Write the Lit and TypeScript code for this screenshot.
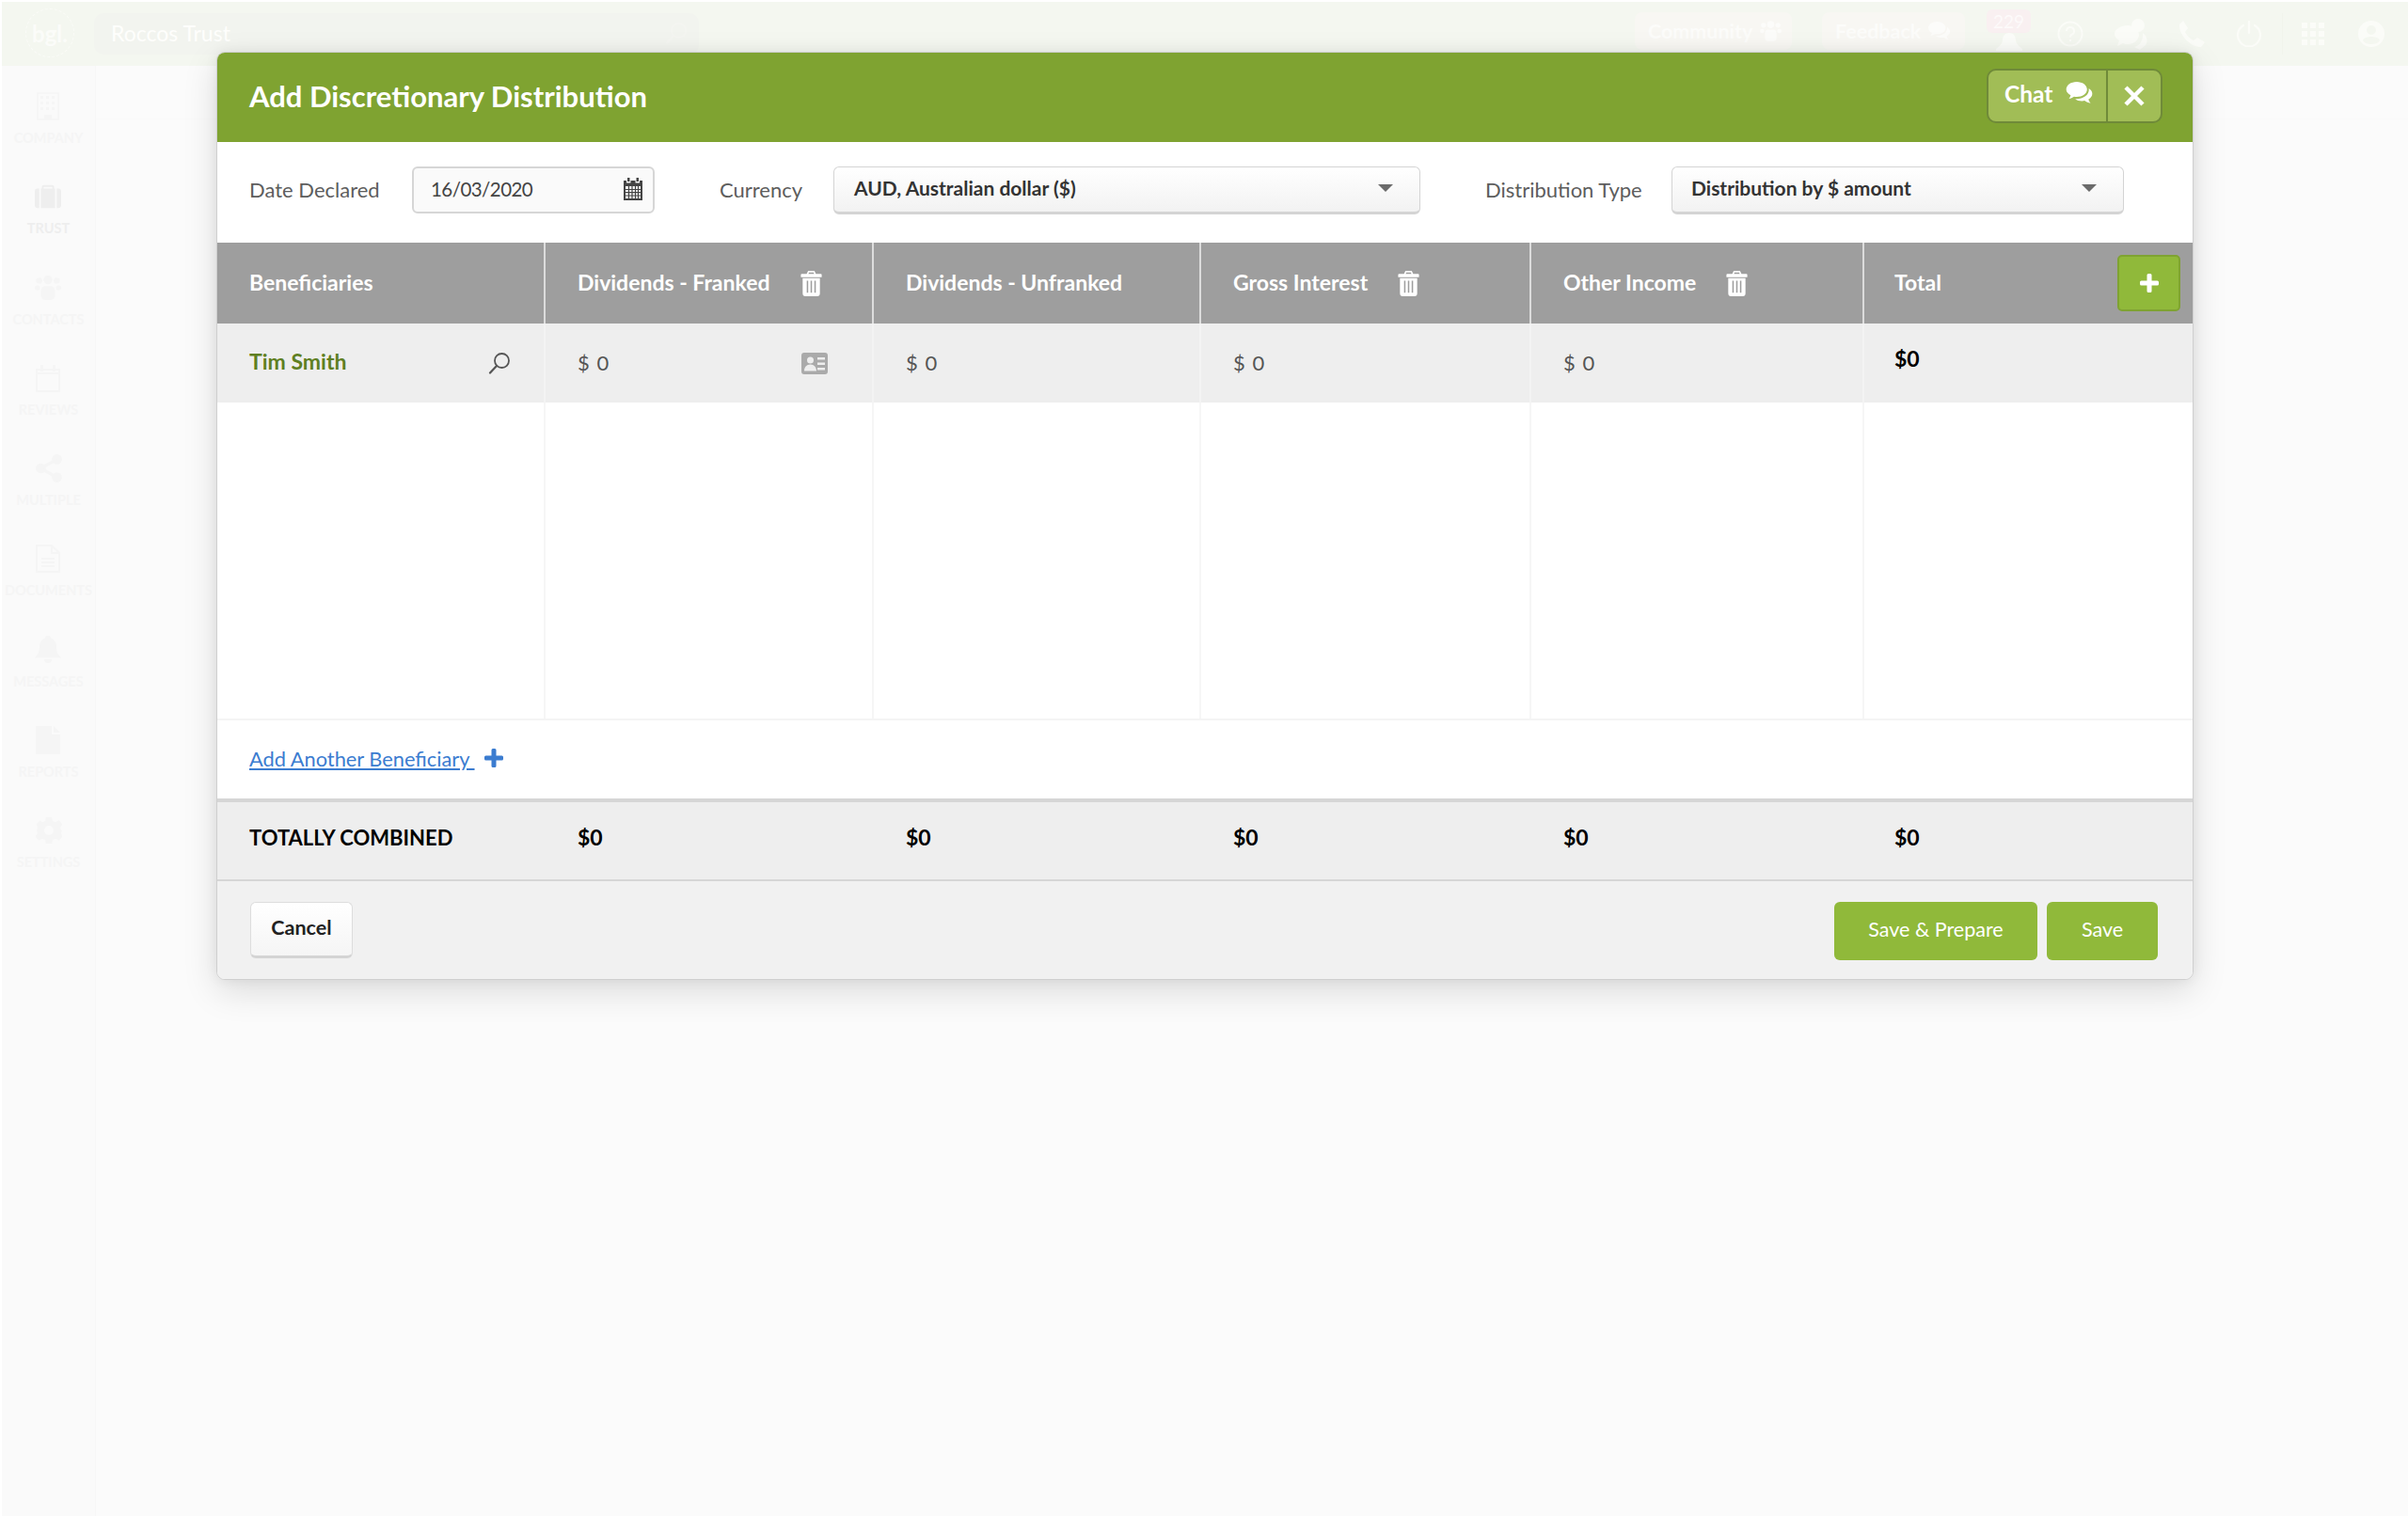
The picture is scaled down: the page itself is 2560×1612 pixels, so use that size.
import { LitElement, html, css, svg } from "lit";
import { customElement } from "lit/decorators.js";

const ic = (cls: string, vb: string, body: unknown) =>
  html`<svg class=${cls} viewBox=${vb} aria-hidden="true">${body}</svg>`;

const trash = () => ic("i-trash", "0 0 23 28", svg`
  <path fill="currentColor" d="M8 0h7l1.6 3.4H22a1 1 0 0 1 1 1V7H0V4.400a1 1 0 0 1 1-1h5.400zM9 1.800 8.300 3.400h6.400L14 1.800z"/>
  <path fill="currentColor" fill-rule="evenodd" d="M2 8h19v17a3 3 0 0 1-3 3H5a3 3 0 0 1-3-3zM6.500 11v13h1.600V11zM10.700 11v13h1.600V11zM14.900 11v13h1.600V11z"/>`);

const bubbles = (cls: string) => ic(cls, "0 0 30 26", svg`
  <path fill="currentColor" d="M12 0c6.600 0 12 3.900 12 8.700s-5.400 8.700-12 8.700c-1 0-2-.1-3-.3-1.800 1.300-3.800 2.100-6 2.400 1-1.100 1.800-2.500 2.100-4C2 14 0 11.500 0 8.700 0 3.900 5.400 0 12 0z"/>
  <path fill="currentColor" d="M26 7.500c2.500 1.500 4 3.700 4 6.200 0 2.600-1.700 5-4.300 6.400.3 1.700 1.200 3.300 2.400 4.600-2.600-.3-4.900-1.300-6.900-2.900-1 .2-2 .3-3 .3-3.100 0-5.900-.9-7.900-2.400 7.900.6 16.900-4.100 15.700-12.200z"/>`);

const plus = (cls: string) => ic(cls, "0 0 20 20", svg`
  <path fill="currentColor" d="M7.500 1.500a1.500 1.500 0 0 1 1.500-1.500h2a1.500 1.500 0 0 1 1.500 1.500v6h6a1.500 1.500 0 0 1 1.500 1.500v2a1.500 1.500 0 0 1-1.500 1.500h-6v6a1.500 1.500 0 0 1-1.500 1.500H9a1.500 1.500 0 0 1-1.500-1.500v-6h-6A1.500 1.500 0 0 1 0 11V9a1.500 1.500 0 0 1 1.500-1.500h6z"/>`);

const paw = (cls: string) => ic(cls, "0 0 30 28", svg`
  <g fill="currentColor"><circle cx="15" cy="5" r="5"/><circle cx="5" cy="6" r="3.500"/><circle cx="25" cy="6" r="3.500"/><circle cx="3" cy="14" r="3"/><circle cx="27" cy="14" r="3"/><rect x="7" y="12" width="16" height="16" rx="5"/></g>`);

const sideIcons: Record<string, unknown> = {
  COMPANY: ic("s-icon", "0 0 24 30", svg`<path fill="none" stroke="currentColor" stroke-width="1.500" d="M1 1h22v28H1z"/><g fill="currentColor"><rect x="4" y="4" width="3" height="3"/><rect x="10" y="4" width="3" height="3"/><rect x="16" y="4" width="3" height="3"/><rect x="4" y="10" width="3" height="3"/><rect x="10" y="10" width="3" height="3"/><rect x="16" y="10" width="3" height="3"/><rect x="4" y="16" width="3" height="3"/><rect x="10" y="16" width="3" height="3"/><rect x="16" y="16" width="3" height="3"/><rect x="8" y="24" width="8" height="5"/></g>`),
  TRUST: ic("s-icon", "0 0 30 26", svg`<path fill="currentColor" d="M10 0h10a2 2 0 0 1 2 2v3h-2V2H10v3H8V2a2 2 0 0 1 2-2zM3 4h2v22H3a3 3 0 0 1-3-3V7a3 3 0 0 1 3-3zM7 4h16v22H7zM25 4h2a3 3 0 0 1 3 3v16a3 3 0 0 1-3 3h-2z"/>`),
  CONTACTS: paw("s-icon"),
  REVIEWS: ic("s-icon", "0 0 28 30", svg`<path fill="none" stroke="currentColor" stroke-width="2" d="M2 6h24v23H2zM2 10h24"/><rect fill="currentColor" x="6" y="1" width="3" height="7"/><rect fill="currentColor" x="19" y="1" width="3" height="7"/>`),
  MULTIPLE: ic("s-icon", "0 0 26 28", svg`<g fill="currentColor"><circle cx="5" cy="14" r="5"/><circle cx="21" cy="5" r="5"/><circle cx="21" cy="23" r="5"/></g><path stroke="currentColor" stroke-width="3" d="M5 14 21 5M5 14l16 9"/>`),
  DOCUMENTS: ic("s-icon", "0 0 26 30", svg`<path fill="none" stroke="currentColor" stroke-width="2" d="M1 1h16l8 8v20H1zM17 1v8h8"/><path stroke="currentColor" stroke-width="2" d="M6 15h14M6 19h14M6 23h14"/>`),
  MESSAGES: ic("s-icon", "0 0 28 30", svg`<path fill="currentColor" d="M14 0c2 0 3 1.300 3 2.500 4 1.300 6 5 6 9 0 6 2 9 5 12H0c3-3 5-6 5-12 0-4 2-7.700 6-9C11 1.300 12 0 14 0zM10 25h8a4 4 0 0 1-8 0z"/>`),
  REPORTS: ic("s-icon", "0 0 26 30", svg`<path fill="currentColor" d="M0 0h17v9h9v21H0zM19 0l7 7h-7z"/>`),
  SETTINGS: ic("s-icon", "0 0 28 28", svg`<path fill="currentColor" fill-rule="evenodd" d="M11 0h6l1 4 3 1.300 3.500-2.100 4 4L26 10.700 27 14l1 0v0l-1 3.300 1.500 3.500-4 4L21 22.700 18 24l-1 4h-6l-1-4-3-1.300-3.500 2.100-4-4L2 17.300 1 14l1-3.300L.5 7.200l4-4L7 5.300 10 4zM14 9a5 5 0 1 0 0 10 5 5 0 0 0 0-10z"/>`),
};

const NAV = ["COMPANY", "TRUST", "CONTACTS", "REVIEWS", "MULTIPLE", "DOCUMENTS", "MESSAGES", "REPORTS", "SETTINGS"];

@customElement("app-root")
export class AppRoot extends LitElement {
  static styles = css`
    :host { display: block; position: relative; width: 2560px; height: 1612px; overflow: hidden; background: #fff;
      font-family: "Lato", "Liberation Sans", sans-serif; color: #444; }
    * { box-sizing: border-box; }
    svg { display: block; flex: none; }

    /* faded application behind the dialog */
    .app { display: flex; flex-direction: column; height: 100%; padding: 2px 0 0 2px; }
    .topbar { height: 68px; flex: none; background: #f4f7f0; display: flex; align-items: center; color: #fff; }
    .logo { width: 52px; height: 52px; margin-left: 25px; margin-top: -2px; border: 1.500px dashed #fafbf7; border-radius: 50%; display: flex;
      align-items: center; justify-content: center; font-size: 24px; font-weight: 700; color: #fbfcf9; flex: none; }
    .search { width: 643px; height: 44px; margin-left: 21px; background: #f2f4ef; border-radius: 10px; display: flex; align-items: center;
      justify-content: space-between; padding: 0 12px 2px 18px; font-size: 23px; flex: none; color: #fefefc; }
    .s-faint { width: 24px; height: 24px; color: #f4f5f1; }
    .top-right { margin-left: auto; display: flex; align-items: center; height: 100%; padding-right: 25px; }
    .tb { height: 40px; margin-top: -6px; background: #f8f7f3; border-radius: 8px; display: flex; align-items: center; gap: 8px; padding: 0 14px; font-size: 21.500px; color: #fcfcfa; font-weight: 700; white-space: nowrap; }
    .tb svg { width: 23px; height: 22px; color: #fcfcfa; }
    .tb.com { width: 167px; }
    .tb.fb { width: 152px; margin-left: 32px; }
    .bell { width: 47px; margin-left: 23px; display: flex; flex-direction: column; align-items: center; margin-top: -6px; }
    .badge { width: 47px; height: 25px; background: #f9f0f1; border-radius: 6px; font-size: 19px; text-align: center; line-height: 25px; color: #fdfafa; }
    .bell svg { width: 28px; height: 22px; color: #fbfcf9; }
    .t-icon { color: #fbfcf8; width: 28px; height: 28px; }
    .t1 { margin-left: 28px; } .t2 { margin-left: 33px; width: 36px; height: 34px; } .t3 { margin-left: 32px; } .t4 { margin-left: 33px; }
    .vr { width: 1px; height: 44px; background: #f1f4ec; margin-left: 21px; }
    .t5 { margin-left: 20px; width: 24px; height: 24px; } .t6 { margin-left: 36px; }
    .below { flex: 1; display: flex; min-height: 0; background: #fbfbfb; }
    .side { width: 100px; flex: none; background: #fafafa; border-right: 1px solid #f7f7f7; display: flex; flex-direction: column; align-items: center; padding-top: 28px; }
    .nav { height: 96.300px; flex: none; display: flex; flex-direction: column; align-items: center; gap: 10px; color: #f5f5f5; }
    .nav.on { color: #eeeeee; }
    .s-icon { width: 28px; height: 30px; }
    .nav span { font-size: 14.500px; font-weight: 700; line-height: 18px; }
    .main { flex: 1; }
    .strip { height: 57px; border-bottom: 1px solid #f9f9f9; }

    /* dialog */
    .modal { position: absolute; left: 230px; top: 55px; width: 2102px; height: 987px; border: 1px solid #cfcfcf; border-radius: 9px;
      background: #fff; box-shadow: 0 12px 36px rgba(0,0,0,.13), 0 0 14px rgba(0,0,0,.06); display: flex; flex-direction: column; overflow: hidden; }
    .head { height: 95px; flex: none; background: #7fa331; display: flex; align-items: center; justify-content: space-between; padding: 0 32px 0 34px; }
    .title { font-size: 31px; font-weight: 700; color: #fff; margin-top: -3px; }
    .hbtns { display: flex; height: 58px; width: 187px; border: 2px solid #6f8a39; border-radius: 10px; background: #a1bd56; color: #fff; margin-top: -3px; overflow: hidden; }
    .chat { width: 127px; border-right: 2px solid #6f8a39; display: flex; align-items: center; padding-left: 17px; gap: 14px; font-size: 24.500px; font-weight: 700; padding-bottom: 6px; }
    .chat svg { width: 29px; height: 24px; }
    .closeb { flex: 1; display: flex; align-items: center; justify-content: center; }
    .closeb svg { width: 22px; height: 22px; }

    .filters { height: 107px; flex: none; display: flex; align-items: flex-start; padding-top: 26px; }
    .lbl { font-size: 22px; color: #5d5d5d; line-height: 50px; white-space: nowrap; }
    .l1 { margin-left: 34px; width: 173px; } .l2 { margin-left: 69px; width: 121px; } .l3 { margin-left: 69px; width: 198px; }
    .date { width: 258px; height: 50px; border: 2px solid #d6d6d6; border-radius: 6px; background: #fafafa; display: flex; align-items: center; justify-content: space-between; padding: 0 11px 3px 18px; font-size: 20.500px; letter-spacing: -.55px; color: #444; }
    .date svg { width: 20px; height: 24px; color: #444; }
    .sel { height: 51px; border: 1px solid #d4d4d4; border-bottom: 3px solid #d4d4d4; border-radius: 6px; background: linear-gradient(#fff, #f2f2f2); display: flex; align-items: center; justify-content: space-between; font-size: 21px; font-weight: 700; color: #333; padding: 0 28px 4px 21px; }
    .sel i { display: block; width: 0; height: 0; border-left: 8px solid transparent; border-right: 8px solid transparent; border-top: 8px solid #6b6b6b; }
    .s1 { width: 624px; } .s2 { width: 481px; padding-left: 20px; }

    .cols { display: grid; grid-template-columns: 349px 349px 348px 351px 354px 349px; flex: none; }
    .thead { height: 86px; background: #9e9e9e; color: #fff; font-size: 23px; font-weight: 700; }
    .thead > div { border-right: 2px solid #dcdcdc; display: flex; align-items: center; padding-left: 34px; gap: 32px; padding-bottom: 3px; }
    .thead > div:last-child { border-right: 0; justify-content: space-between; padding: 0 13px 0 32px; }
    .total-lbl { margin-top: -3px; }
    .i-trash { width: 23px; height: 27px; color: #fff; margin-top: 3px; }
    .addcol { width: 67px; height: 60px; background: #90b93a; border: 2px solid #7fa331; border-radius: 5px; display: flex; align-items: center; justify-content: center; }
    .addcol svg { width: 20px; height: 20px; color: #fff; }
    .row { height: 84px; background: #eeeeee; font-size: 22px; color: #555; }
    .row > div { border-right: 2px solid #f3f3f3; display: flex; align-items: center; padding: 0 24px 2px 34px; justify-content: space-between; }
    .row > div:first-child { padding-right: 35px; }
    .row > div:nth-child(2) { padding-right: 47px; }
    .row > div:last-child { border-right: 0; padding-left: 32px; }
    .name { color: #5f7f22; font-weight: 700; font-size: 23px; margin-top: -3px; }
    .row .money { letter-spacing: 1px; }
    .mag { width: 24px; height: 24px; color: #555; margin-top: 2px; }
    .card { width: 28px; height: 23px; color: #aaa; margin-top: 2px; }
    .tot0 { font-weight: 700; font-size: 23px; color: #000; margin-top: -8px; }
    .filler { flex: none; height: 338px; border-bottom: 2px solid #f4f4f4; }
    .filler > div { border-right: 2px solid #f6f6f6; }
    .filler > div:last-child { border-right: 0; }
    .addrow { height: 83px; flex: none; display: flex; align-items: center; padding: 0 0 3px 34px; gap: 10px; font-size: 21.800px; color: #3b7cd0; }
    .addrow a { color: inherit; text-decoration: underline; white-space: pre; }
    .addrow svg { width: 20px; height: 20px; color: #3b7cd0; }
    .totals { height: 88px; background: #eeeeee; border-top: 4px solid #d6d6d6; border-bottom: 2px solid #d6d6d6; font-size: 22px; font-weight: 700; color: #000; }
    .totals > div { display: flex; align-items: center; padding: 0 0 8px 34px; }
    .totals > div:last-child { padding-left: 32px; }
    .totals .mon { font-size: 23px; }
    .foot { flex: 1; background: #f1f1f1; display: flex; align-items: flex-start; justify-content: space-between; padding: 22px 37px 0 35px; }
    .cancel { width: 109px; height: 60px; border: 1px solid #ddd; border-bottom: 3px solid #d4d4d4; border-radius: 6px; background: linear-gradient(#fff, #f5f5f5); font: 700 21.500px "Lato", sans-serif; color: #222; display: flex; align-items: center; justify-content: center; padding-bottom: 4px; }
    .acts { display: flex; gap: 10px; }
    .go { height: 62px; background: #90b93a; color: #fff; border-radius: 6px; font-size: 21.500px; display: flex; align-items: center; justify-content: center; padding-bottom: 4px; }
    .g1 { width: 216px; } .g2 { width: 118px; }
  `;

  render() {
    const mag = (c: string) => ic(c, "0 0 24 24", svg`<circle cx="14.500" cy="9.500" r="7.500" fill="none" stroke="currentColor" stroke-width="1.800"/><path stroke="currentColor" stroke-width="2.200" stroke-linecap="round" d="M9 15 2 22.500"/>`);
    return html`
      <div class="app">
        <div class="topbar">
          <div class="logo">bgl.</div>
          <div class="search"><span>Roccos Trust</span>${mag("s-faint")}</div>
          <div class="top-right">
            <div class="tb com">Community ${paw("")}</div>
            <div class="tb fb">Feedback ${bubbles("")}</div>
            <div class="bell"><div class="badge">229</div>${ic("", "0 0 28 22", svg`<path fill="currentColor" d="M14 0c5 0 7 4 7 8 0 3 3 6 7 9v2H0v-2c4-3 7-6 7-9 0-4 2-8 7-8zM11 20h6a3 3 0 0 1-6 0z"/>`)}</div>
            ${ic("t-icon t1", "0 0 28 28", svg`<circle cx="14" cy="14" r="12.500" fill="none" stroke="currentColor" stroke-width="2"/><path fill="none" stroke="currentColor" stroke-width="2" d="M10 11a4 4 0 1 1 5.500 3.700c-1 .5-1.500 1-1.500 2.800M14 20v2"/>`)}
            ${ic("t-icon t2", "0 0 36 34", svg`<circle cx="25" cy="8" r="7" fill="currentColor"/><path fill="currentColor" d="M14 8c7 0 12 5 12 10s-5 10-12 10c-2 0-3 0-5-1l-6 3 2-6c-3-2-5-4-5-7C0 12 7 8 14 8zM30 16c4 3 6 8 3 13l-6 5-6-3c6-1 10-8 9-15z"/>`)}
            ${ic("t-icon t3", "0 0 28 28", svg`<path fill="currentColor" d="M5 0l5 8-3 4c2 4 5 7 9 9l4-3 8 5-4 5C12 28 0 14 1 4z"/>`)}
            ${ic("t-icon t4", "0 0 28 28", svg`<path fill="none" stroke="currentColor" stroke-width="2.200" stroke-linecap="round" d="M8 5a12 12 0 1 0 12 0M14 1v12"/>`)}
            <div class="vr"></div>
            ${ic("t-icon t5", "0 0 24 24", svg`<g fill="currentColor"><rect width="6" height="6"/><rect x="9" width="6" height="6"/><rect x="18" width="6" height="6"/><rect y="9" width="6" height="6"/><rect x="9" y="9" width="6" height="6"/><rect x="18" y="9" width="6" height="6"/><rect y="18" width="6" height="6"/><rect x="9" y="18" width="6" height="6"/><rect x="18" y="18" width="6" height="6"/></g>`)}
            ${ic("t-icon t6", "0 0 28 28", svg`<path fill="currentColor" fill-rule="evenodd" d="M14 0a14 14 0 1 1 0 28 14 14 0 0 1 0-28zm0 5a5 5 0 1 0 0 10 5 5 0 0 0 0-10zM5 21c2 3 5 4 9 4s7-1 9-4c-1-3-5-4-9-4s-8 1-9 4z"/>`)}
          </div>
        </div>
        <div class="below">
          <nav class="side">
            ${NAV.map((n) => html`<div class="nav ${n === "TRUST" ? "on" : ""}">${sideIcons[n]}<span>${n}</span></div>`)}
          </nav>
          <div class="main"><div class="strip"></div></div>
        </div>
      </div>

      <section class="modal">
        <header class="head">
          <div class="title">Add Discretionary Distribution</div>
          <div class="hbtns">
            <div class="chat">Chat ${bubbles("")}</div>
            <div class="closeb">${ic("", "0 0 22 22", svg`<path stroke="#fff" stroke-width="4.500" d="M2 2l18 18M20 2 2 20"/>`)}</div>
          </div>
        </header>

        <div class="filters">
          <div class="lbl l1">Date Declared</div>
          <div class="date">16/03/2020
            ${ic("", "0 0 20 24", svg`<path fill="currentColor" fill-rule="evenodd" d="M4 0h2.500v4H4zM13.500 0H16v4h-2.500zM0 3h3v2.500h4.500V3h5v2.500H17V3h3v21H0zM2 9v13h16V9z"/><path stroke="currentColor" stroke-width="1.200" d="M2 12.500h16M2 15.700h16M2 19h16M5.500 9v13M9 9v13M12.500 9v13M15.500 9v13"/>`)}
          </div>
          <div class="lbl l2">Currency</div>
          <div class="sel s1"><span>AUD, Australian dollar ($)</span><i></i></div>
          <div class="lbl l3">Distribution Type</div>
          <div class="sel s2"><span>Distribution by $ amount</span><i></i></div>
        </div>

        <div class="cols thead">
          <div>Beneficiaries</div>
          <div>Dividends - Franked ${trash()}</div>
          <div>Dividends - Unfranked</div>
          <div>Gross Interest ${trash()}</div>
          <div>Other Income ${trash()}</div>
          <div><span class="total-lbl">Total</span><div class="addcol">${plus("")}</div></div>
        </div>

        <div class="cols row">
          <div><span class="name">Tim Smith</span>${mag("mag")}</div>
          <div><span class="money">$ 0</span>${ic("card", "0 0 28 23", svg`<path fill="currentColor" fill-rule="evenodd" d="M3 0h22a3 3 0 0 1 3 3v17a3 3 0 0 1-3 3H3a3 3 0 0 1-3-3V3a3 3 0 0 1 3-3zm6.500 4.500a3.500 3.500 0 1 0 0 7 3.500 3.500 0 0 0 0-7zM3 19.500h13c0-4-2.500-7-6.500-7S3 15.500 3 19.500zM17 5v2.500h8V5zm0 5.500V13h8v-2.500zm0 5.500v2.500h8V16z"/>`)}</div>
          <div><span class="money">$ 0</span></div>
          <div><span class="money">$ 0</span></div>
          <div><span class="money">$ 0</span></div>
          <div><span class="tot0">$0</span></div>
        </div>

        <div class="cols filler"><div></div><div></div><div></div><div></div><div></div><div></div></div>

        <div class="addrow"><a>Add Another Beneficiary </a>${plus("")}</div>

        <div class="cols totals">
          <div>TOTALLY COMBINED</div>
          <div class="mon">$0</div><div class="mon">$0</div><div class="mon">$0</div><div class="mon">$0</div><div class="mon">$0</div>
        </div>

        <footer class="foot">
          <div class="cancel">Cancel</div>
          <div class="acts"><div class="go g1">Save &amp; Prepare</div><div class="go g2">Save</div></div>
        </footer>
      </section>
    `;
  }
}
